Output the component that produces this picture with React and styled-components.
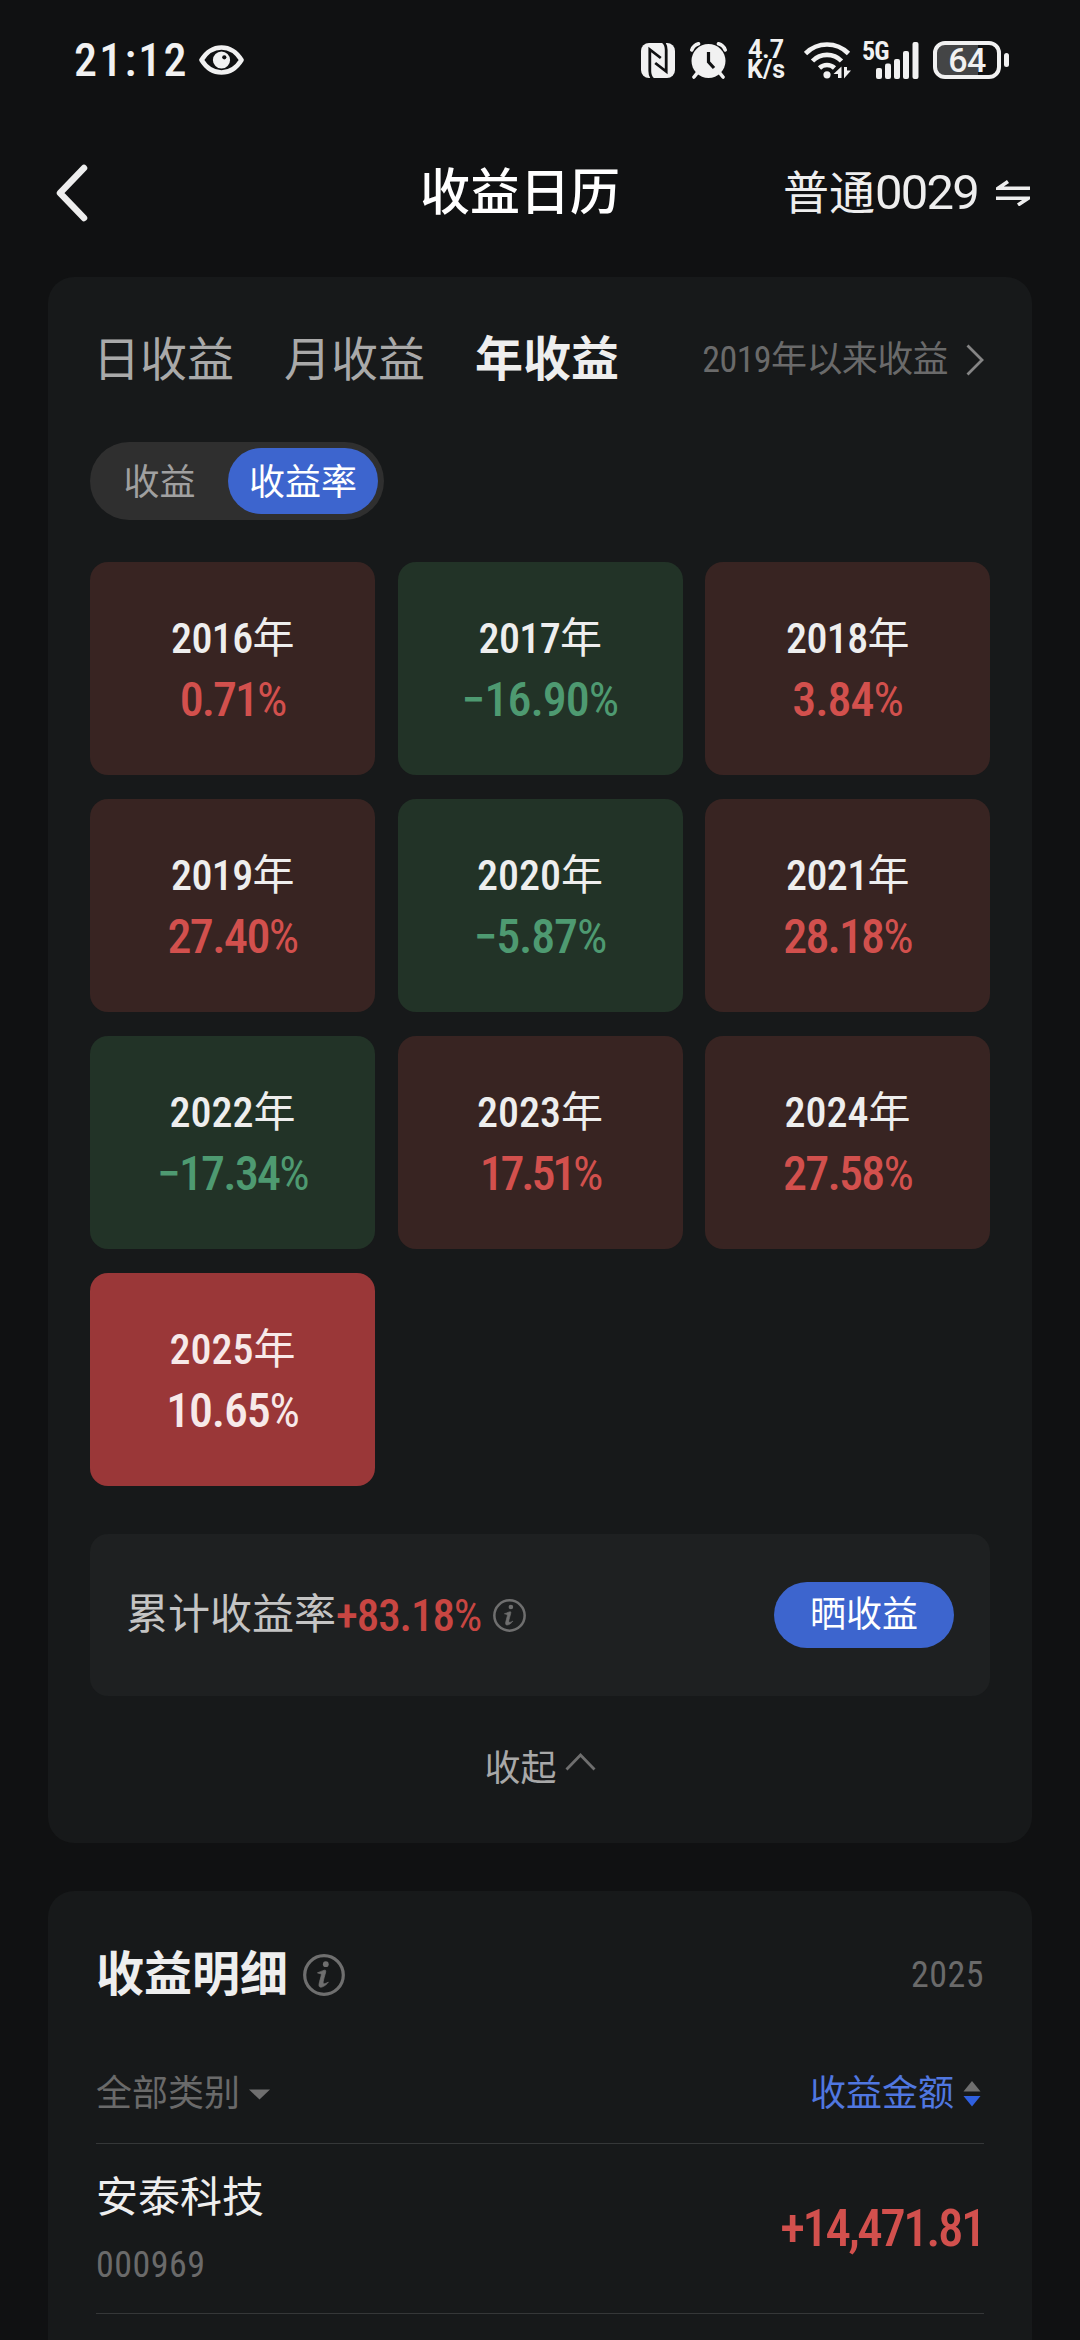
import React from "react";
import styled, { createGlobalStyle } from "styled-components";

const GlobalStyle = createGlobalStyle`
  * {
    box-sizing: border-box;
  }

  body {
    margin: 0;
    background: #101112;
    color: #eeeeee;
    font-family: Roboto, "Noto Sans CJK SC", sans-serif;
    font-stretch: 75%;
    line-height: 1.4;
  }

  svg {
    display: block;
    flex-shrink: 0;
  }
`;

const Screen = styled.div`
  width: 1080px;
  height: 2340px;
  overflow: hidden;
  display: flex;
  flex-direction: column;
  padding: 0 48px;
`;

/* ---------- status bar ---------- */

const StatusBar = styled.div`
  height: 120px;
  flex-shrink: 0;
  display: flex;
  align-items: center;
  padding: 0 23px 0 26px;
  color: #f1f1f1;
`;

const Clock = styled.span`
  width: 125px;
  font-size: 46px;
  font-weight: 500;
  letter-spacing: 2.2px;
`;

const StatusIcons = styled.div`
  display: flex;
  align-items: center;
  margin-left: auto;
`;

const NetSpeed = styled.div`
  display: flex;
  flex-direction: column;
  align-items: center;
  width: 38px;
  margin: 0 19px 0 20px;
  font-size: 25px;
  line-height: 20px;
  font-weight: 700;
  font-stretch: 100%;
  white-space: nowrap;
`;

const Signal = styled.div`
  position: relative;
  width: 57px;
  margin: 0 14px 0 11px;
  display: flex;
  justify-content: flex-end;
`;

const SignalLabel = styled.span`
  position: absolute;
  left: 0;
  top: -1px;
  font-size: 26px;
  line-height: 20px;
  font-weight: 700;
  letter-spacing: -1px;
`;

const Battery = styled.div`
  display: flex;
  align-items: center;
  gap: 3px;
`;

const BatteryBody = styled.div`
  width: 68px;
  height: 38px;
  border: 4px solid #f1f1f1;
  border-radius: 12px;
  background: linear-gradient(to right, #444546 69%, transparent 69%);
  font-size: 34px;
  line-height: 30px;
  font-weight: 500;
  font-stretch: 100%;
  letter-spacing: -0.5px;
  text-align: center;
`;

const BatteryTip = styled.div`
  width: 5px;
  height: 14px;
  border-radius: 3px;
  background: #f1f1f1;
`;

/* ---------- nav bar ---------- */

const NavBar = styled.div`
  height: 146px;
  flex-shrink: 0;
  margin-bottom: 11px;
  display: flex;
  align-items: center;
  padding: 0 2px 0 8px;
`;

const Title = styled.h1`
  margin: 0 0 0 332px;
  font-size: 50px;
  line-height: 70px;
  font-weight: 500;
  color: #ffffff;
`;

const Account = styled.div`
  display: flex;
  align-items: center;
  margin-left: auto;
  font-size: 46px;
  line-height: 70px;
`;

const AccountNo = styled.span`
  margin-right: 18px;
  font-size: 49px;
  font-stretch: 100%;
  letter-spacing: -1.8px;
`;

/* ---------- cards ---------- */

const Card = styled.section`
  width: 984px;
  flex-shrink: 0;
  background: #17191a;
  border-radius: 26px;
`;

const CalendarCard = styled(Card)`
  padding: 43px 42px 0;
`;

const DetailCard = styled(Card)`
  margin-top: 48px;
  padding: 0 48px 100px;
`;

const Tabs = styled.div`
  display: flex;
  align-items: center;
  height: 80px;
  padding: 0 6px 0 3px;
`;

const Tab = styled.div`
  font-size: ${(p) => (p.$active ? 48 : 47)}px;
  font-weight: ${(p) => (p.$active ? 700 : 400)};
  color: ${(p) => (p.$active ? "#eeeeee" : "#a9a9a9")};
  margin-right: 50px;
`;

const SinceLink = styled.div`
  display: flex;
  align-items: center;
  margin-left: auto;
  font-size: 36px;
  letter-spacing: -0.6px;
  color: #6a6a6a;

  svg {
    margin-left: 18px;
  }
`;

const Switch = styled.div`
  display: flex;
  align-items: center;
  width: 294px;
  height: 78px;
  margin: 42px 0;
  padding: 6px;
  border-radius: 39px;
  background: #2f2f2f;
  font-size: 36px;
`;

const SwitchItem = styled.div`
  width: ${(p) => (p.$active ? 150 : 132)}px;
  height: 66px;
  line-height: 71px;
  border-radius: 33px;
  text-align: center;
  padding-right: ${(p) => (p.$active ? 0 : 5)}px;
  color: ${(p) => (p.$active ? "#ffffff" : "#a0a0a0")};
  background: ${(p) => (p.$active ? "#3d65ce" : "transparent")};
`;

const YearGrid = styled.div`
  display: grid;
  grid-template-columns: repeat(3, 285px);
  grid-auto-rows: 213px;
  justify-content: space-between;
  row-gap: 24px;
`;

const tileColors = {
  up: { bg: "#382422", text: "#d2504d" },
  down: { bg: "#223327", text: "#4e9a71" },
  current: { bg: "#9a3738", text: "#f7e9e9" },
};

const YearTile = styled.div`
  border-radius: 18px;
  padding-top: 46px;
  text-align: center;
  line-height: 61px;
  background: ${(p) => tileColors[p.$kind].bg};
  color: ${(p) => tileColors[p.$kind].text};
`;

const YearLabel = styled.div`
  font-size: 42px;
  font-weight: 500;
  letter-spacing: ${(p) => (p.$tight ? -0.6 : 0)}px;
  color: ${(p) => (p.$current ? "#f7e9e9" : "#eeeeee")};
`;

const Regular = styled.span`
  font-weight: 400;
`;

const YearRate = styled.div`
  font-size: 48px;
  font-weight: 500;
  letter-spacing: ${(p) => p.$tracking}px;
`;

const Summary = styled.div`
  display: flex;
  align-items: center;
  height: 162px;
  margin-top: 48px;
  padding: 0 36px;
  border-radius: 18px;
  background: #1e2021;
  font-size: 42px;
  color: #c4c4c4;
`;

const SummaryRate = styled.span`
  margin-right: 12px;
  font-size: 45px;
  font-weight: 500;
  letter-spacing: -1.1px;
  color: #c84642;
`;

const ShareButton = styled.button`
  width: 180px;
  height: 66px;
  margin-left: auto;
  padding: 0;
  border: none;
  border-radius: 33px;
  background: #3d65ce;
  color: #ffffff;
  font: inherit;
  font-size: 36px;
`;

const Collapse = styled.div`
  display: flex;
  align-items: center;
  justify-content: center;
  height: 147px;
  font-size: 36px;
  color: #a8a8a8;

  svg {
    margin: -16px 0 0 8px;
  }
`;

/* ---------- details ---------- */

const DetailHeader = styled.div`
  display: flex;
  align-items: center;
  height: 168px;
`;

const DetailTitle = styled.h2`
  margin: 0 15px 0 0;
  font-size: 48px;
  font-weight: 700;
`;

const DetailYear = styled.span`
  margin-left: auto;
  font-size: 36px;
  letter-spacing: 0.5px;
  color: #6a6a6a;
`;

const FilterRow = styled.div`
  display: flex;
  align-items: center;
  height: 85px;
  padding-bottom: 13px;
  border-bottom: 1px solid #353738;
  font-size: 36px;
  color: #6a6a6a;
`;

const Category = styled.div`
  display: flex;
  align-items: center;
  gap: 8px;
`;

const SortBy = styled.div`
  display: flex;
  align-items: center;
  gap: 9px;
  margin-left: auto;
  padding-right: 3px;
  color: #5077e0;
`;

const StockRow = styled.div`
  display: flex;
  align-items: center;
  justify-content: space-between;
  height: 170px;
  border-bottom: 1px solid #353738;
`;

const StockName = styled.div`
  font-size: 42px;
  line-height: 60px;
  margin-bottom: 12px;
`;

const StockCode = styled.div`
  font-size: 36px;
  line-height: 50px;
  letter-spacing: 0.5px;
  color: #6a6a6a;
`;

const Amount = styled.div`
  font-size: 51px;
  font-weight: 500;
  letter-spacing: -2.5px;
  color: #d2504d;
`;

const years = [
  { year: "2016", rate: "0.71", kind: "up", tracking: -2 },
  { year: "2017", rate: "−16.90", kind: "down", tracking: -1 },
  { year: "2018", rate: "3.84", kind: "up", tracking: -1 },
  { year: "2019", rate: "27.40", kind: "up", tracking: -1.6 },
  { year: "2020", rate: "−5.87", kind: "down", tracking: -1.2 },
  { year: "2021", rate: "28.18", kind: "up", tracking: -1.9 },
  { year: "2022", rate: "−17.34", kind: "down", tracking: -1.8 },
  { year: "2023", rate: "17.51", kind: "up", tracking: -3.2 },
  { year: "2024", rate: "27.58", kind: "up", tracking: -1.8 },
  { year: "2025", rate: "10.65", kind: "current", tracking: -1.2 },
];

const EyeIcon = () => (
  <svg width="45" height="30" viewBox="0 0 45 30">
    <path
      d="M2.5 15C7.5 7 14.5 2.5 22.5 2.5S37.5 7 42.5 15C37.5 23 30.5 27.5 22.5 27.5S7.5 23 2.5 15Z"
      fill="none"
      stroke="#f1f1f1"
      strokeWidth="4.6"
      strokeLinejoin="round"
    />
    <circle cx="22.5" cy="15" r="8.6" fill="#f1f1f1" />
    <circle cx="25.3" cy="12.3" r="2.1" fill="#101112" />
  </svg>
);

const NfcIcon = () => (
  <svg width="34" height="35" viewBox="0 0 34 35">
    <rect width="34" height="35" rx="8" fill="#f1f1f1" />
    <g fill="none" stroke="#101112" strokeWidth="2.8">
      <path d="M12 36C9.5 34 8.8 32 8.8 28V6.5L19.8 15" />
      <path d="M22 -1C24.5 1 25.2 3 25.2 7V28.5L14.2 20" />
    </g>
  </svg>
);

const AlarmIcon = () => (
  <svg width="37" height="37" viewBox="0 0 37 37">
    <g stroke="#f1f1f1" strokeWidth="3.6" strokeLinecap="round" fill="none">
      <path d="M1.8 8A10 10 0 0 1 8.5 1.8M35.2 8A10 10 0 0 0 28.5 1.8" />
      <path d="M8 30L4 35M29 30L33 35" />
    </g>
    <circle cx="18.5" cy="19" r="17" fill="#f1f1f1" />
    <path d="M18.5 10V20L24 26" fill="none" stroke="#101112" strokeWidth="3.2" />
  </svg>
);

const WifiIcon = () => (
  <svg width="47" height="38" viewBox="0 0 47 38">
    <g fill="none" stroke="#f1f1f1" strokeWidth="4.6">
      <path d="M1.5 12.5C13.5 0.5 32.5 0.5 44.5 12.5" />
      <path d="M8.5 20C16.5 11.8 29.5 11.8 37.5 20" />
      <path d="M15.5 27C19.8 23 26.2 23 30.5 27" />
    </g>
    <circle cx="23" cy="33.8" r="3.6" fill="#f1f1f1" />
    <path d="M29.5 33L37.5 25.5V37H34V33ZM40 26H43V29.5H47L40 37.5Z" fill="#f1f1f1" />
  </svg>
);

const bars = [
  [0, 26],
  [9, 21.5],
  [18, 17],
  [27, 9],
  [36.5, 0],
];

const SignalBars = () => (
  <svg width="43" height="37" viewBox="0 0 43 37">
    {bars.map(([x, y]) => (
      <rect key={x} x={x} y={y} width="6" height={37 - y} rx="2" fill="#f1f1f1" />
    ))}
  </svg>
);

const BackIcon = () => (
  <svg width="32" height="58" viewBox="0 0 32 58">
    <path
      d="M28 4L4 29L28 54"
      fill="none"
      stroke="#eeeeee"
      strokeWidth="6.5"
      strokeLinecap="round"
      strokeLinejoin="round"
    />
  </svg>
);

const SwapIcon = () => (
  <svg width="34" height="26" viewBox="0 0 34 26">
    <path
      d="M34 8.3H2L12 1.5M0 18.3H32L22 25"
      fill="none"
      stroke="#eeeeee"
      strokeWidth="3.6"
    />
  </svg>
);

const RightIcon = () => (
  <svg width="18" height="32" viewBox="0 0 18 32">
    <path d="M1.5 1.5L16 16L1.5 30.5" fill="none" stroke="#858585" strokeWidth="2.8" />
  </svg>
);

const CaretUpIcon = () => (
  <svg width="31" height="18" viewBox="0 0 31 18">
    <path d="M1.5 16.5L15.5 2L29.5 16.5" fill="none" stroke="#6f6f6f" strokeWidth="2.8" />
  </svg>
);

const InfoIcon = ({ size }) => (
  <svg width={size} height={size} viewBox="0 0 42 42">
    <circle cx="21" cy="21" r="19.3" fill="none" stroke="#6f6f6f" strokeWidth="3.2" />
    <circle cx="22.8" cy="10.2" r="2.9" fill="#6f6f6f" />
    <path
      d="M14.5 18.8C18.5 17.5 21 15.8 22.2 16.2C23.6 16.6 22 20 20.5 26C19.5 30.5 20.5 30.5 25.3 28.2C22 32.5 16.5 35 16 31.5C15.8 29 18.5 22 18.3 20.3C18.1 19.3 16 19.8 14.5 18.8Z"
      fill="#6f6f6f"
      stroke="#6f6f6f"
      strokeWidth="0.8"
    />
  </svg>
);

const DownTriangle = () => (
  <svg width="23" height="11" viewBox="0 0 23 11">
    <path d="M1 0.5H22L11.5 10.5Z" fill="#6f6f6f" />
  </svg>
);

const SortIcon = () => (
  <svg width="18" height="26" viewBox="0 0 18 26">
    <path d="M9 0L17.5 10.5H0.5Z" fill="#6f6f6f" />
    <path d="M9 25.5L17.5 15H0.5Z" fill="#2f60e0" />
  </svg>
);

const AlarmSlot = styled.div`
  margin-left: 15px;
`;

const App = () => {
  return (
    <Screen>
      <GlobalStyle />
      <StatusBar>
        <Clock>21:12</Clock>
        <EyeIcon />
        <StatusIcons>
          <NfcIcon />
          <AlarmSlot>
            <AlarmIcon />
          </AlarmSlot>
          <NetSpeed>
            <span>4.7</span>
            <span>K/s</span>
          </NetSpeed>
          <WifiIcon />
          <Signal>
            <SignalLabel>5G</SignalLabel>
            <SignalBars />
          </Signal>
          <Battery>
            <BatteryBody>64</BatteryBody>
            <BatteryTip />
          </Battery>
        </StatusIcons>
      </StatusBar>

      <NavBar>
        <BackIcon />
        <Title>收益日历</Title>
        <Account>
          普通<AccountNo>0029</AccountNo>
          <SwapIcon />
        </Account>
      </NavBar>

      <CalendarCard>
        <Tabs>
          <Tab>日收益</Tab>
          <Tab>月收益</Tab>
          <Tab $active>年收益</Tab>
          <SinceLink>
            2019年以来收益
            <RightIcon />
          </SinceLink>
        </Tabs>
        <Switch>
          <SwitchItem>收益</SwitchItem>
          <SwitchItem $active>收益率</SwitchItem>
        </Switch>
        <YearGrid>
          {years.map(({ year, rate, kind, tracking }) => (
            <YearTile key={year} $kind={kind}>
              <YearLabel $tight={year.includes("1")} $current={kind === "current"}>
                {year}
                <Regular>年</Regular>
              </YearLabel>
              <YearRate $tracking={tracking}>
                {rate}
                <Regular>%</Regular>
              </YearRate>
            </YearTile>
          ))}
        </YearGrid>
        <Summary>
          累计收益率
          <SummaryRate>
            +83.18<Regular>%</Regular>
          </SummaryRate>
          <InfoIcon size={33} />
          <ShareButton>晒收益</ShareButton>
        </Summary>
        <Collapse>
          收起
          <CaretUpIcon />
        </Collapse>
      </CalendarCard>

      <DetailCard>
        <DetailHeader>
          <DetailTitle>收益明细</DetailTitle>
          <InfoIcon size={42} />
          <DetailYear>2025</DetailYear>
        </DetailHeader>
        <FilterRow>
          <Category>
            全部类别
            <DownTriangle />
          </Category>
          <SortBy>
            收益金额
            <SortIcon />
          </SortBy>
        </FilterRow>
        <StockRow>
          <div>
            <StockName>安泰科技</StockName>
            <StockCode>000969</StockCode>
          </div>
          <Amount>+14,471.81</Amount>
        </StockRow>
      </DetailCard>
    </Screen>
  );
};

export default App;
